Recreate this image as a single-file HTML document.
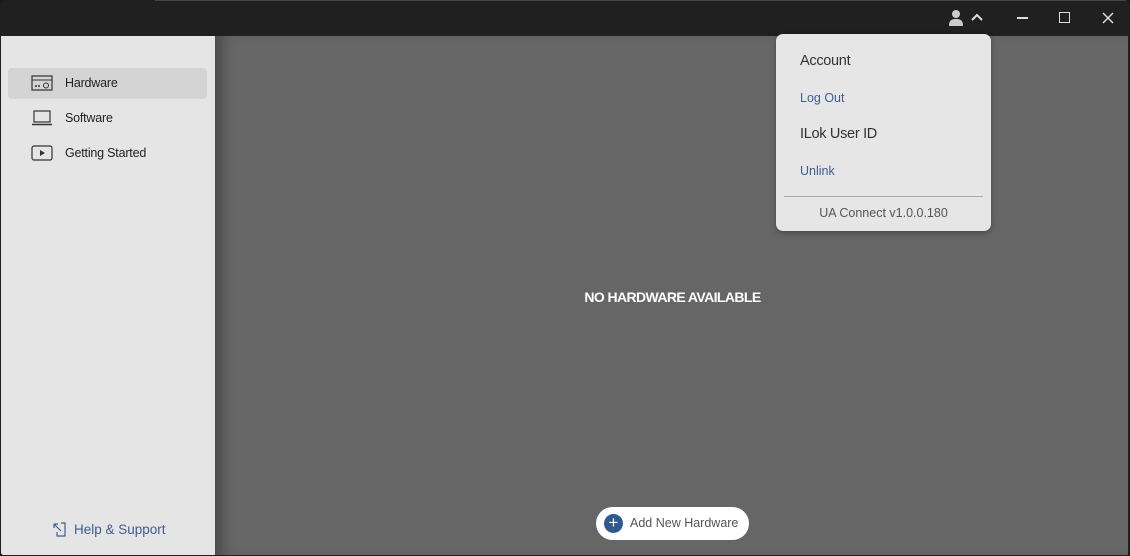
<!DOCTYPE html>
<html><head><meta charset="utf-8"><style>
*{margin:0;padding:0;box-sizing:border-box}
body{width:1130px;height:556px;overflow:hidden;background:#1a1a1a;font-family:"Liberation Sans",sans-serif;position:relative}
.win{position:absolute;left:0;top:0;width:1130px;height:556px;background:#202020;border-radius:6px;overflow:hidden}
.side{position:absolute;left:1px;top:36px;width:214px;height:519px;background:#e5e5e5}
.main{position:absolute;left:215px;top:36px;width:913px;height:519px;background:#666;box-shadow:inset 14px 0 12px -6px rgba(0,0,0,.25)}
.item{position:absolute;left:7px;width:199px;height:31px;border-radius:4px;font-size:12.5px;color:#222;line-height:31px;padding-left:57px;letter-spacing:-.2px}
.item.sel{background:#d4d4d4}
.item svg{position:absolute;left:23px;top:7px}
.help{position:absolute;left:52px;top:522px;font-size:13.5px;color:#3d5f8f}
.help svg{vertical-align:-3px;margin-right:7px}
.nh{position:absolute;left:0;width:1130px;text-align:center;top:289px;color:#fff;font-weight:bold;font-size:14px;letter-spacing:-.6px;padding-left:215px}
.btn{position:absolute;left:596px;top:507px;width:153px;height:33px;background:#fff;border-radius:17px;font-size:12.5px;color:#555;line-height:33px;padding-left:34px}
.btn .pl{position:absolute;left:8px;top:7px;width:19px;height:19px;border-radius:50%;background:#2f5a8f;color:#fff;text-align:center;line-height:18px;font-size:17px}
.menu{position:absolute;left:776px;top:34px;width:215px;height:197px;background:#e6e6e6;border-radius:7px;box-shadow:0 2px 6px rgba(0,0,0,.3)}
.menu div{position:absolute;left:24px}
.hd{font-size:14.5px;color:#333;letter-spacing:-.3px}
.lk{font-size:12.5px;color:#3d5f8f}
.sep{left:8px!important;right:8px;top:162px;height:1px;background:#aaa}
.ver{left:0!important;width:215px;text-align:center;top:172px;font-size:12.5px;color:#555}
</style></head><body>
<div class="win">
<div style="position:absolute;left:155px;top:0;width:1000px;height:1px;background:#444"></div>
<div class="side">
 <div class="item sel" style="top:32px"><svg width="22" height="16" viewBox="0 0 22 16"><rect x="1" y="1" width="20" height="14" fill="none" stroke="#333" stroke-width="1.2"/><line x1="1" y1="5" x2="21" y2="5" stroke="#333"/><circle cx="5" cy="11" r="1" fill="#333"/><circle cx="8" cy="11" r="1" fill="#333"/><circle cx="15" cy="10.5" r="2.5" fill="none" stroke="#333"/></svg>Hardware</div>
 <div class="item" style="top:67px"><svg width="22" height="16" viewBox="0 0 22 16"><rect x="3" y="1" width="16" height="11" fill="none" stroke="#333" stroke-width="1.2"/><line x1="1" y1="14.5" x2="21" y2="14.5" stroke="#333" stroke-width="1.5"/></svg>Software</div>
 <div class="item" style="top:102px"><svg width="22" height="16" viewBox="0 0 22 16"><rect x="1" y="1" width="20" height="14" rx="2" fill="none" stroke="#333" stroke-width="1.2"/><path d="M9 5 L14 8 L9 11Z" fill="#333"/></svg>Getting Started</div>
</div>
<div class="main"></div>
<div class="help"><svg width="15" height="15" viewBox="0 0 15 15"><path d="M9 1H13V14H5V10" fill="none" stroke="#3d5f8f" stroke-width="1.2"/><path d="M2 2L9 9M2 2V6M2 2H6" fill="none" stroke="#3d5f8f" stroke-width="1.2"/></svg>Help &amp; Support</div>
<div class="nh">NO HARDWARE AVAILABLE</div>
<div class="btn"><span class="pl">+</span>Add New Hardware</div>
<svg style="position:absolute;left:948px;top:9px" width="40" height="18" viewBox="0 0 40 18"><circle cx="8" cy="5" r="4" fill="#ccc"/><path d="M1 17C1 11 4 10 8 10S15 11 15 17Z" fill="#ccc"/><path d="M24 11L29 6L34 11" fill="none" stroke="#ddd" stroke-width="2"/></svg>
<div style="position:absolute;left:1017px;top:17px;width:11px;height:1.5px;background:#ddd"></div>
<div style="position:absolute;left:1059px;top:12px;width:11px;height:11px;border:1.5px solid #ddd"></div>
<svg style="position:absolute;left:1102px;top:12px" width="12" height="12" viewBox="0 0 12 12"><path d="M1 1L11 11M11 1L1 11" stroke="#ddd" stroke-width="1.5"/></svg>
<div class="menu">
 <div class="hd" style="top:19px">Account</div>
 <div class="lk" style="top:57px">Log Out</div>
 <div class="hd" style="top:92px">ILok User ID</div>
 <div class="lk" style="top:130px">Unlink</div>
 <div class="sep"></div>
 <div class="ver">UA Connect v1.0.0.180</div>
</div>
</div>
</body></html>
